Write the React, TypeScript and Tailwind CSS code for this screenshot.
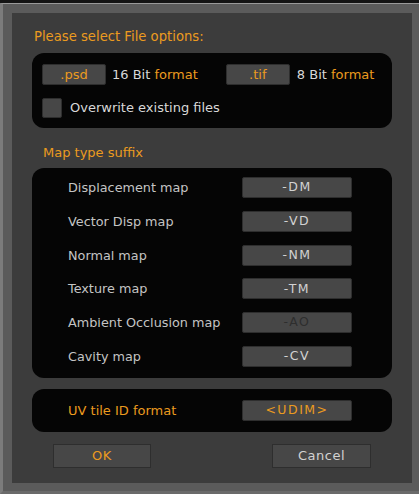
import React from "react";

const ORANGE = "text-[#eb9b1f]";

function SuffixBtn({ label, dim, orange }: { label: string; dim?: boolean; orange?: boolean }) {
  return (
    <div
      className={`w-[110px] h-[21px] flex items-center justify-center bg-[#474747] border border-[#2e2e2e] rounded-[2px] text-[12.5px] tracking-[1.5px] ${
        dim ? "text-[#2e2e2e]" : orange ? ORANGE : "text-[#d2d2d2]"
      }`}
    >
      {label}
    </div>
  );
}

const maps = [
  { name: "Displacement map", suffix: "-DM" },
  { name: "Vector Disp map", suffix: "-VD" },
  { name: "Normal map", suffix: "-NM" },
  { name: "Texture map", suffix: "-TM" },
  { name: "Ambient Occlusion map", suffix: "-AO", dim: true },
  { name: "Cavity map", suffix: "-CV" },
];

export default function App() {
  return (
    <div
      className="w-[419px] h-[494px] bg-[#141414] pt-[3px] overflow-hidden"
      style={{ fontFamily: '"DejaVu Sans", Verdana, sans-serif' }}
    >
      <div className="h-[491px] bg-[#5b5b5b] border-t border-l-[3px] border-t-[#9a9a9a] border-l-[#7c7c7c] border-b-[3px] border-b-[#6a6a6a] pl-[9px] pr-[7px] pt-[9px]">
        {/* main panel */}
        <div className="w-[400px] h-[470px] bg-[#3c3c3c] flex flex-col px-[20px]">
          <div className={`mt-[14px] h-[20px] leading-[20px] pl-[2px] text-[13.2px] ${ORANGE}`}>
            Please select File options:
          </div>

          {/* file options */}
          <div className="mt-[6px] h-[75px] bg-[#050505] rounded-[12px] pl-[10px] pt-[11px] flex flex-col gap-[13px]">
            <div className="flex items-center h-[21px]">
              <div className={`w-[64px] h-[21px] flex items-center justify-center bg-[#474747] border border-[#2e2e2e] rounded-[2px] text-[13px] ${ORANGE}`}>
                .psd
              </div>
              <span className="ml-[6px] text-[13px] text-[#d8d8d8]">
                16 Bit <span className={ORANGE}>format</span>
              </span>
              <div className={`ml-[28px] w-[64px] h-[21px] flex items-center justify-center bg-[#474747] border border-[#2e2e2e] rounded-[2px] text-[13px] ${ORANGE}`}>
                .tif
              </div>
              <span className="ml-[7px] text-[13px] text-[#d8d8d8]">
                8 Bit <span className={ORANGE}>format</span>
              </span>
            </div>
            <div className="flex items-center h-[20px]">
              <div className="w-[20px] h-[20px] bg-[#474747] border border-[#2e2e2e] rounded-[2px]" />
              <span className="ml-[8px] text-[13px] text-[#d8d8d8]">Overwrite existing files</span>
            </div>
          </div>

          <div className={`mt-[15px] h-[20px] leading-[20px] pl-[11px] text-[13px] ${ORANGE}`}>
            Map type suffix
          </div>

          {/* map suffixes */}
          <div className="mt-[5px] h-[210px] bg-[#050505] rounded-[12px] pt-[9px] pl-[36px] flex flex-col gap-[12.8px]">
            {maps.map((m) => (
              <div key={m.name} className="flex items-center h-[21px]">
                <span className="w-[174px] text-[12.8px] text-[#c4c4c4]">{m.name}</span>
                <SuffixBtn label={m.suffix} dim={m.dim} />
              </div>
            ))}
          </div>

          {/* uv tile */}
          <div className="mt-[11px] h-[43px] bg-[#050505] rounded-[12px] pl-[36px] flex items-center">
            <span className={`w-[174px] text-[13px] ${ORANGE}`}>UV tile ID format</span>
            <SuffixBtn label="<UDIM>" orange />
          </div>

          {/* buttons */}
          <div className="mt-[12px] flex justify-between px-[21px]">
            <div className={`w-[98px] h-[24px] flex items-center justify-center bg-[#474747] border border-[#2e2e2e] text-[13px] tracking-[0.5px] ${ORANGE}`}>
              OK
            </div>
            <div className="w-[99px] h-[24px] flex items-center justify-center bg-[#474747] border border-[#2e2e2e] text-[13px] tracking-[0.5px] text-[#d2d2d2]">
              Cancel
            </div>
          </div>
        </div>
      </div>
    </div>
  );
}
